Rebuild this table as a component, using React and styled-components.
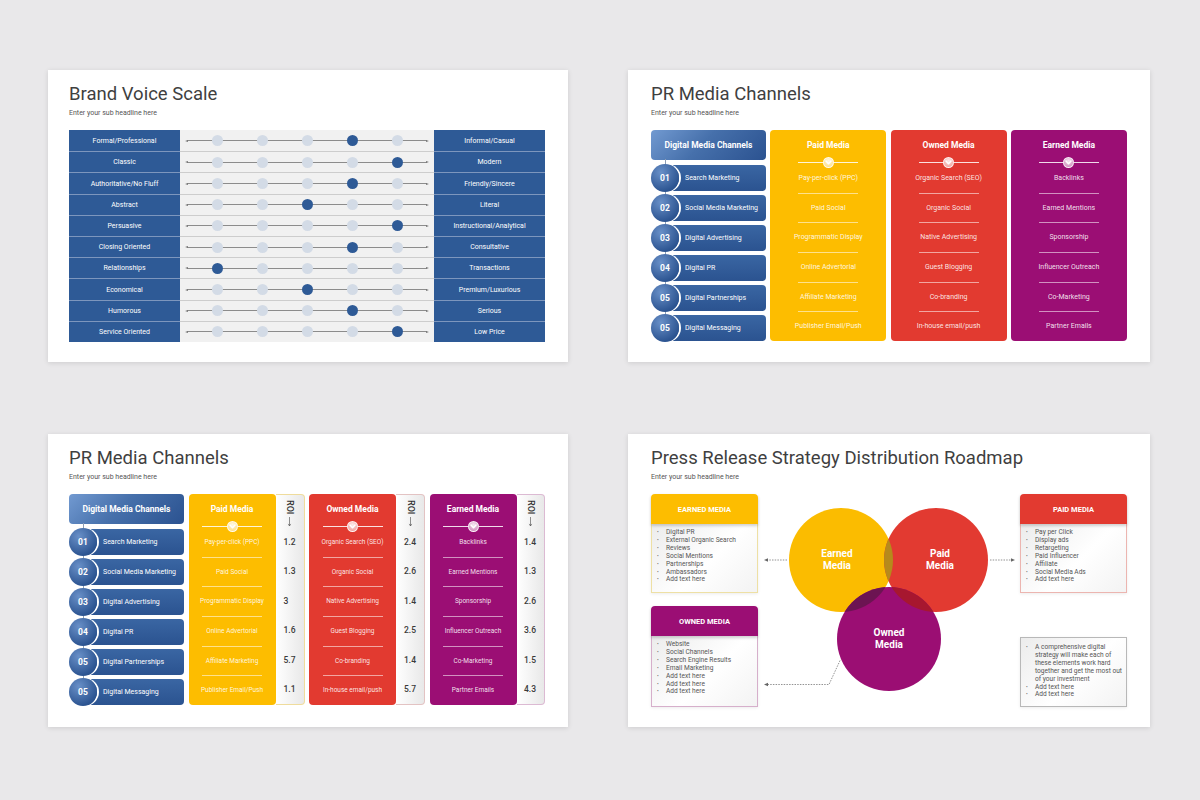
import React from 'react';
import styled, { createGlobalStyle } from 'styled-components';

const BLUE = '#2e5a96';
const PAID = '#fdbd00';
const OWNED = '#e23a30';
const EARNED = '#9b0e74';

const GlobalStyle = createGlobalStyle`
  * { box-sizing: border-box; }
  body {
    margin: 0;
    background: #e9e8ea;
    font-family: Roboto, "Liberation Sans", sans-serif;
  }
`;

const Page = styled.div`
  width: 1200px;
  height: 800px;
  padding: 70px 0 0 48px;
  display: grid;
  grid-template-columns: 520px 522px;
  grid-template-rows: 292px 293px;
  column-gap: 60px;
  row-gap: 72px;
`;

const Slide = styled.section`
  background: #fff;
  box-shadow: 0 1px 5px rgba(0, 0, 0, 0.12);
  padding: 13px 0 0 ${props => props.$left || 21}px;
  display: flex;
  flex-direction: column;
`;

const Title = styled.h2`
  margin: 0;
  font-size: 18.5px;
  line-height: 22px;
  font-weight: 400;
  color: #3f3f3f;
`;

const Sub = styled.p`
  margin: 3px 0 0;
  font-size: 7px;
  line-height: 10px;
  color: #555;
`;

const Body = styled.div`
  margin-top: 12px;
  width: 476px;
  display: flex;
  gap: ${props => props.$gap || 0}px;
`;

/* ---------- brand voice scale ---------- */

const Scale = styled.div`
  width: 100%;
  height: 212px;
  display: flex;
  flex-direction: column;
`;

const ScaleRow = styled.div`
  flex: 1;
  display: grid;
  grid-template-columns: 111px 1fr 111px;

  &:not(:first-child) > * {
    border-top: 1px solid var(--sep);
  }
`;

const ScaleLabel = styled.div`
  --sep: #7d96bd;
  background: ${BLUE};
  color: #fff;
  font-size: 7px;
  display: flex;
  align-items: center;
  justify-content: center;
`;

const Track = styled.div`
  --sep: #cdcdcd;
  position: relative;
  background: linear-gradient(#8c8c8c, #8c8c8c) center / calc(100% - 14px) 1px no-repeat, #f1f1f1;
  display: flex;
  align-items: center;
  justify-content: center;
  gap: 34px;

  &::before,
  &::after {
    content: '';
    position: absolute;
    top: 50%;
    transform: translateY(-50%);
    border-top: 1.5px solid transparent;
    border-bottom: 1.5px solid transparent;
  }
  &::before {
    left: 5px;
    border-right: 3px solid #777;
  }
  &::after {
    right: 5px;
    border-left: 3px solid #777;
  }
`;

const Dot = styled.span`
  width: 11px;
  height: 11px;
  border-radius: 50%;
  background: ${props => (props.$on ? BLUE : '#d3dbe6')};
  position: relative;
  z-index: 1;
`;

const scaleRows = [
  ['Formal/Professional', 'Informal/Casual', 3],
  ['Classic', 'Modern', 4],
  ['Authoritative/No  Fluff', 'Friendly/Sincere', 3],
  ['Abstract', 'Literal', 2],
  ['Persuasive', 'Instructional/Analytical', 4],
  ['Closing Oriented', 'Consultative', 3],
  ['Relationships', 'Transactions', 0],
  ['Economical', 'Premium/Luxurious', 2],
  ['Humorous', 'Serious', 3],
  ['Service Oriented', 'Low Price', 4],
];

/* ---------- channel columns ---------- */

const ChannelCol = styled.div`
  width: 115px;
  flex-shrink: 0;
  display: flex;
  flex-direction: column;
`;

const ChannelHead = styled.div`
  height: 30px;
  border-radius: 4px;
  background: linear-gradient(135deg, #729ad1 0%, #4670ab 45%, #2b5290 100%);
  color: #fff;
  font-weight: 700;
  font-size: 8.5px;
  display: flex;
  align-items: center;
  justify-content: center;
`;

const ChannelList = styled.div`
  margin-top: 5px;
  display: flex;
  flex-direction: column;
  gap: 4px;
`;

const ChannelRow = styled.div`
  position: relative;
  height: 26px;
  margin-left: 9px;
  border-radius: 4px;
  background: linear-gradient(180deg, #3a66a3, #2b5390);
  display: flex;
  align-items: center;
  color: #fff;
  font-size: 7px;

  &::before {
    content: '';
    position: absolute;
    left: 4.5px;
    top: -6px;
    width: 1px;
    height: 6px;
    background: #8d9db5;
  }
`;

const NumBadge = styled.span`
  width: 28px;
  height: 28px;
  margin-left: -9px;
  margin-right: 6px;
  flex-shrink: 0;
  border-radius: 50%;
  background: radial-gradient(circle at 35% 30%, #6990c8, #2c5491 72%);
  box-shadow: 2px 0 0 0 #fff;
  display: flex;
  align-items: center;
  justify-content: center;
  font-weight: 700;
  font-size: 8.5px;
  position: relative;
  z-index: 1;
`;

const MediaCol = styled.div`
  width: ${props => props.$w}px;
  height: 211px;
  flex-shrink: 0;
  border-radius: 4px;
  background: ${props => props.$color};
  color: #fff;
  display: flex;
  flex-direction: column;
  position: relative;
  z-index: 1;
`;

const MediaHead = styled.div`
  height: 30px;
  display: flex;
  align-items: center;
  justify-content: center;
  font-weight: 700;
  font-size: 8.5px;
`;

const Divider = styled.div`
  width: 60px;
  height: 11px;
  margin: -3px auto -5px;
  display: flex;
  align-items: center;

  &::before,
  &::after {
    content: '';
    flex: 1;
    height: 1px;
    background: rgba(255, 255, 255, 0.85);
  }
`;

const ChevDot = styled.span`
  width: 11px;
  height: 11px;
  border-radius: 50%;
  background: radial-gradient(circle at 50% 30%, rgba(255, 255, 255, 0.9), rgba(255, 255, 255, 0.45));
  border: 1px solid rgba(255, 255, 255, 0.8);
  display: flex;
  align-items: center;
  justify-content: center;
`;

const MediaItems = styled.div`
  flex: 1;
  display: flex;
  flex-direction: column;
`;

const MediaItem = styled.div`
  flex: 1;
  display: flex;
  align-items: center;
  justify-content: center;
  text-align: center;
  font-size: ${props => props.$size}px;
  color: rgba(255, 255, 255, 0.88);

  & + & {
    background: linear-gradient(
        rgba(255, 255, 255, ${props => (props.$strong ? 0.95 : 0.55)}),
        rgba(255, 255, 255, ${props => (props.$strong ? 0.95 : 0.55)})
      )
      top center / 60px 1px no-repeat;
  }
`;

const Group = styled.div`
  display: flex;
`;

const RoiCol = styled.div`
  width: ${props => props.$w}px;
  height: 211px;
  border: 1px solid ${props => props.$tint};
  border-left: none;
  border-radius: 0 4px 4px 0;
  background: linear-gradient(90deg, #fff, #e8e8e8);
  display: flex;
  flex-direction: column;
  align-items: center;
`;

const RoiHead = styled.div`
  height: 32px;
  padding-top: 5px;
  display: flex;
  flex-direction: column;
  align-items: center;
  gap: 3px;
`;

const RoiLabel = styled.span`
  writing-mode: vertical-rl;
  font-size: 9px;
  line-height: 1;
  font-weight: 500;
  color: #333;
`;

const RoiValues = styled.div`
  flex: 1;
  display: flex;
  flex-direction: column;
`;

const RoiValue = styled.div`
  flex: 1;
  display: flex;
  align-items: center;
  font-size: 8.5px;
  font-weight: 500;
  color: #3a3a3a;
`;

const channels = ['Search Marketing', 'Social Media Marketing', 'Digital Advertising', 'Digital PR', 'Digital Partnerships', 'Digital Messaging'];
const nums = ['01', '02', '03', '04', '05', '05'];
const paidItems = ['Pay-per-click (PPC)', 'Paid Social', 'Programmatic Display', 'Online Advertorial', 'Affiliate Marketing', 'Publisher Email/Push'];
const ownedItems = ['Organic Search (SEO)', 'Organic Social', 'Native Advertising', 'Guest Blogging', 'Co-branding', 'In-house email/push'];
const earnedItems = ['Backlinks', 'Earned Mentions', 'Sponsorship', 'Influencer Outreach', 'Co-Marketing', 'Partner Emails'];

const ChannelColumn = () => (
  <ChannelCol>
    <ChannelHead>Digital Media Channels</ChannelHead>
    <ChannelList>
      {channels.map((c, i) => (
        <ChannelRow key={c}>
          <NumBadge>{nums[i]}</NumBadge>
          {c}
        </ChannelRow>
      ))}
    </ChannelList>
  </ChannelCol>
);

const MediaColumn = ({ title, color, items, w, size }) => (
  <MediaCol $w={w} $color={color}>
    <MediaHead>{title}</MediaHead>
    <Divider>
      <ChevDot>
        <svg width="7" height="5" viewBox="0 0 7 5">
          <polyline points="1,1 3.5,3.8 6,1" fill="none" stroke="#fff" strokeWidth="1.5" strokeLinecap="round" strokeLinejoin="round" />
        </svg>
      </ChevDot>
    </Divider>
    <MediaItems>
      {items.map((t, i) => (
        <MediaItem key={t} $size={size} $strong={i % 2 === 0}>{t}</MediaItem>
      ))}
    </MediaItems>
  </MediaCol>
);

const RoiColumn = ({ values, tint, w }) => (
  <RoiCol $tint={tint} $w={w}>
    <RoiHead>
      <RoiLabel>ROI</RoiLabel>
      <svg width="5" height="13" viewBox="0 0 5 13">
        <line x1="2.5" y1="0" x2="2.5" y2="12" stroke="#444" strokeWidth="0.8" />
        <polyline points="0.8,9.4 2.5,12.2 4.2,9.4" fill="none" stroke="#444" strokeWidth="0.8" />
      </svg>
    </RoiHead>
    <RoiValues>
      {values.map((v, i) => (
        <RoiValue key={i}>{v}</RoiValue>
      ))}
    </RoiValues>
  </RoiCol>
);

/* ---------- roadmap ---------- */

const Roadmap = styled.div`
  width: 476px;
  height: 213px;
  display: grid;
  grid-template-columns: 107px 1fr 107px;
`;

const SideCol = styled.div`
  display: flex;
  flex-direction: column;
  justify-content: space-between;
`;

const InfoBox = styled.div`
  height: ${props => props.$h}px;
  display: flex;
  flex-direction: column;
  box-shadow: 0 1px 3px rgba(0, 0, 0, 0.08);
`;

const BoxHead = styled.div`
  height: 30px;
  flex-shrink: 0;
  background: ${props => props.$color};
  border-radius: 4px 4px 0 0;
  color: #fff;
  font-weight: 700;
  font-size: 7.5px;
  display: flex;
  align-items: center;
  justify-content: center;
  box-shadow: 0 2px 3px rgba(0, 0, 0, 0.18);
  position: relative;
  z-index: 1;
`;

const BoxList = styled.ul`
  flex: 1;
  margin: 0;
  padding: ${props => props.$pad || '5px 4px 0 4px'};
  list-style: none;
  border: 1px solid ${props => props.$tint};
  border-top: ${props => (props.$open ? 'none' : `1px solid ${props.$tint}`)};
  background: linear-gradient(135deg, #ececec 0%, #fff 55%, #f3f3f3 100%);
  font-size: 6.6px;
  line-height: 7.9px;
  color: #555;

  li {
    display: grid;
    grid-template-columns: 10px 1fr;
  }
  li::before {
    content: '•';
    font-size: 5px;
    color: #666;
    padding-left: 1px;
  }
`;

const Diagram = styled.svg`
  display: block;
  width: 262px;
  height: 213px;
`;

const earnedList = ['Digital PR', 'External Organic Search', 'Reviews', 'Social Mentions', 'Partnerships', 'Ambassadors', 'Add text here'];
const ownedList = ['Website', 'Social Channels', 'Search Engine Results', 'Email Marketing', 'Add text here', 'Add text here', 'Add text here'];
const paidList = ['Pay per Click', 'Display ads', 'Retargeting', 'Paid Influencer', 'Affiliate', 'Social Media Ads', 'Add text here'];
const noteList = ['A comprehensive digital strategy will make each of these elements work hard together and get the most out of your investment', 'Add text here', 'Add text here'];

const Venn = () => {
  const E = { cx: 83, cy: 66, r: 52 };
  const P = { cx: 178, cy: 66, r: 52 };
  const O = { cx: 131, cy: 145, r: 52 };
  const label = { fill: '#fff', fontSize: 10, fontWeight: 700, textAnchor: 'middle', fontFamily: 'Roboto, sans-serif' };
  const dash = { stroke: '#777', strokeWidth: 0.8, strokeDasharray: '1.5 1.2', fill: 'none' };
  return (
    <Diagram viewBox="0 0 262 213">
      <defs>
        <clipPath id="clipE"><circle {...E} /></clipPath>
        <clipPath id="clipP"><circle {...P} /></clipPath>
      </defs>
      <circle {...E} fill="#fbbc00" />
      <circle {...P} fill="#e23a31" />
      <circle {...O} fill="#9b0e73" />
      <circle {...P} fill="#b68a1c" clipPath="url(#clipE)" />
      <circle {...O} fill="#6c1452" clipPath="url(#clipE)" />
      <circle {...O} fill="#a7172f" clipPath="url(#clipP)" />

      <text {...label} x="79" y="63">Earned</text>
      <text {...label} x="79" y="75">Media</text>
      <text {...label} x="182" y="63">Paid</text>
      <text {...label} x="182" y="75">Media</text>
      <text {...label} x="131" y="142">Owned</text>
      <text {...label} x="131" y="154">Media</text>

      <line x1="29" y1="66" x2="9" y2="66" {...dash} />
      <polygon points="6,66 10,64.3 10,67.7" fill="#666" />
      <line x1="232" y1="66" x2="254" y2="66" {...dash} />
      <polygon points="257,66 253,64.3 253,67.7" fill="#666" />
      <polyline points="82,166.5 71,190.5 9,190.5" {...dash} />
      <polygon points="6,190.5 10,188.8 10,192.2" fill="#666" />
    </Diagram>
  );
};

const BulletBox = ({ items, tint, pad, open }) => (
  <BoxList $tint={tint} $pad={pad} $open={open}>
    {items.map((t, i) => (
      <li key={i}>{t}</li>
    ))}
  </BoxList>
);

const App = () => (
  <>
    <GlobalStyle />
    <Page>
      <Slide>
        <Title>Brand Voice Scale</Title>
        <Sub>Enter your sub headline here</Sub>
        <Body>
          <Scale>
            {scaleRows.map(([l, r, on]) => (
              <ScaleRow key={l}>
                <ScaleLabel>{l}</ScaleLabel>
                <Track>
                  {[0, 1, 2, 3, 4].map(i => (
                    <Dot key={i} $on={i === on} />
                  ))}
                </Track>
                <ScaleLabel>{r}</ScaleLabel>
              </ScaleRow>
            ))}
          </Scale>
        </Body>
      </Slide>

      <Slide $left={23}>
        <Title>PR Media Channels</Title>
        <Sub>Enter your sub headline here</Sub>
        <Body $gap={4.3}>
          <ChannelColumn />
          <MediaColumn title="Paid Media" color={PAID} items={paidItems} w={116} size={7} />
          <MediaColumn title="Owned Media" color={OWNED} items={ownedItems} w={116} size={7} />
          <MediaColumn title="Earned Media" color={EARNED} items={earnedItems} w={116} size={7} />
        </Body>
      </Slide>

      <Slide>
        <Title>PR Media Channels</Title>
        <Sub>Enter your sub headline here</Sub>
        <Body $gap={4.5}>
          <ChannelColumn />
          <Group>
            <MediaColumn title="Paid Media" color={PAID} items={paidItems} w={87} size={6.5} />
            <RoiColumn w={29} tint="#efdc9c" values={['1.2', '1.3', '3', '1.6', '5.7', '1.1']} />
          </Group>
          <Group>
            <MediaColumn title="Owned Media" color={OWNED} items={ownedItems} w={87} size={6.5} />
            <RoiColumn w={29} tint="#e3c3c3" values={['2.4', '2.6', '1.4', '2.5', '1.4', '5.7']} />
          </Group>
          <Group>
            <MediaColumn title="Earned Media" color={EARNED} items={earnedItems} w={87} size={6.5} />
            <RoiColumn w={28} tint="#dcbad3" values={['1.4', '1.3', '2.6', '3.6', '1.5', '4.3']} />
          </Group>
        </Body>
      </Slide>

      <Slide $left={23}>
        <Title>Press Release Strategy Distribution Roadmap</Title>
        <Sub>Enter your sub headline here</Sub>
        <Body>
          <Roadmap>
            <SideCol>
              <InfoBox $h={99}>
                <BoxHead $color={PAID}>EARNED MEDIA</BoxHead>
                <BulletBox items={earnedList} tint="#eee0a4" open />
              </InfoBox>
              <InfoBox $h={101}>
                <BoxHead $color={EARNED}>OWNED MEDIA</BoxHead>
                <BulletBox items={ownedList} tint="#d6afcb" open />
              </InfoBox>
            </SideCol>
            <Venn />
            <SideCol>
              <InfoBox $h={99}>
                <BoxHead $color={OWNED}>PAID MEDIA</BoxHead>
                <BulletBox items={paidList} tint="#ecb5b0" open />
              </InfoBox>
              <InfoBox $h={70}>
                <BulletBox items={noteList} tint="#b8b8b8" pad="6px 4px 0 4px" />
              </InfoBox>
            </SideCol>
          </Roadmap>
        </Body>
      </Slide>
    </Page>
  </>
);

export default App;
